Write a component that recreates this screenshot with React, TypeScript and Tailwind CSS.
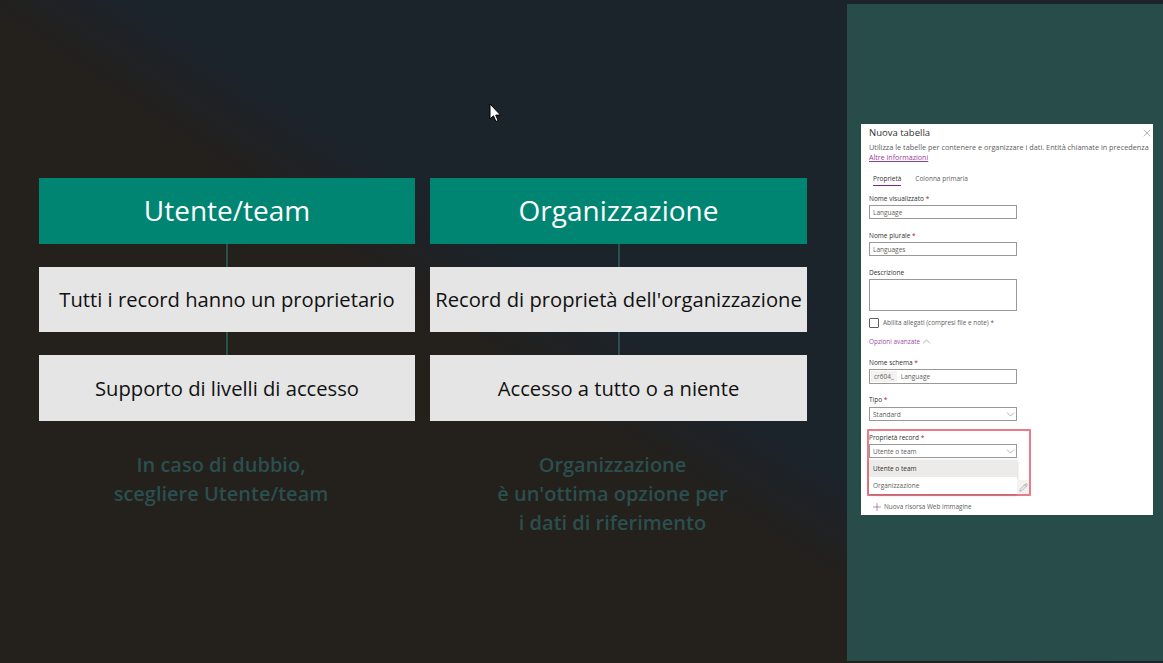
import { ChevronDown, ChevronUp, Pencil, Plus, X } from 'lucide-react';

const font = "font-['Open_Sans','Noto_Sans',sans-serif]";

function Column({ title, items, note, className }: { title: string; items: string[]; note: string[]; className: string }) {
  return (
    <div className={`flex flex-col ${className}`}>
      <div className="flex h-[66px] items-center justify-center bg-[#008573] pb-[2px] text-[28px] text-white">{title}</div>
      {items.map((item, i) => (
        <div key={item} className="flex flex-col items-center">
          <div className="h-[23px] w-[2px] bg-[#28504e]" />
          <div
            className={`flex w-full items-center justify-center whitespace-nowrap bg-[#e5e5e5] text-[20.2px] text-[#111] ${
              i === 0 ? 'h-[65px]' : 'h-[66px]'
            }`}
          >
            {item}
          </div>
        </div>
      ))}
      <div className="mt-[29px] pr-3 text-center text-[20px] leading-[29px] font-semibold text-[#2a4f4e]">
        {note.map((line) => (
          <div key={line}>{line}</div>
        ))}
      </div>
    </div>
  );
}

function Label({ text, required = true, className = '' }: { text: string; required?: boolean; className?: string }) {
  return (
    <div className={`mb-[-1px] pt-[1px] text-[6.5px] leading-[10px] text-[#323130] ${className}`}>
      {text}
      {required && <span className="text-[#a4262c]"> *</span>}
    </div>
  );
}

function Field({ value, chevron = false, className = 'mt-[2px]' }: { value: string; chevron?: boolean; className?: string }) {
  return (
    <div
      className={`flex h-[14px] w-[148px] items-center justify-between border-[1.5px] border-[#9a9896] bg-white pt-[1px] pl-[3px] text-[6.5px] text-[#605e5c] ${className}`}
    >
      {value}
      {chevron && <ChevronDown size={13} strokeWidth={1.2} className="mt-[-1px] mr-[-1px] shrink-0 text-[#8a8886]" />}
    </div>
  );
}

export default function App() {
  return (
    <div className={`relative flex h-[663px] w-[1163px] overflow-hidden bg-[linear-gradient(34deg,#24201c_44%,#1b232b_52%)] ${font}`}>
      <div className="flex w-[847px] gap-[15px] pt-[178px] pl-[39px]">
        <Column
          className="w-[376px]"
          title="Utente/team"
          items={['Tutti i record hanno un proprietario', 'Supporto di livelli di accesso']}
          note={['In caso di dubbio,', 'scegliere Utente/team']}
        />
        <Column
          className="w-[377px]"
          title="Organizzazione"
          items={["Record di proprietà dell'organizzazione", 'Accesso a tutto o a niente']}
          note={['Organizzazione', "è un'ottima opzione per", 'i dati di riferimento']}
        />
      </div>

      <div className="mt-1 mb-[2px] w-[316px] bg-[#274c4a] pt-[120px] pl-[14px]">
        <div className="relative h-[391px] w-[292px] bg-white px-2 pt-[2px]">
          <div className="flex items-center justify-between">
            <span className="text-[9.5px] leading-[13px] text-[#323130]">Nuova tabella</span>
            <X size={12} strokeWidth={1.2} className="mr-[-8px] text-[#8a8886]" />
          </div>
          <div className="mt-[3px] text-[7.3px] leading-[11px] whitespace-nowrap text-[#605e5c]">
            Utilizza le tabelle per contenere e organizzare i dati. Entità chiamate in precedenza
          </div>
          <div className="mt-[-1px] text-[7.1px] leading-[10px] text-[#9a3a9a] underline">Altre informazioni</div>

          <div className="mt-[12px] flex gap-[14px] pl-1 text-[6.5px] leading-[10px] text-[#605e5c]">
            <div className="border-b border-[#7b2a86] pb-[1px] text-[#323130]">Proprietà</div>
            <div>Colonna primaria</div>
          </div>

          <Label text="Nome visualizzato" className="mt-[7px]" />
          <Field value="Language" />
          <Label text="Nome plurale" className="mt-[11px]" />
          <Field value="Languages" />
          <Label text="Descrizione" required={false} className="mt-[11px]" />
          <div className="mt-[2px] h-[32px] w-[148px] border-[1.5px] border-[#9a9896]" />

          <div className="mt-[7px] flex items-center gap-[4px] text-[6.4px] leading-[10px] text-[#605e5c]">
            <div className="h-[10px] w-[10px] rounded-[1px] border border-[#605e5c]" />
            <span>Abilita allegati (compresi file e note) *</span>
          </div>

          <div className="mt-[8px] flex h-[10px] items-center pt-[1px] text-[6.4px] leading-[10px] text-[#a04aa6]">
            Opzioni avanzate
            <ChevronUp size={13} strokeWidth={1.2} className="text-[#8a8886]" />
          </div>

          <Label text="Nome schema" className="mt-[11px]" />
          <div className="mt-[2px] flex h-[15px] w-[148px] items-center border-[1.5px] border-[#9a9896] px-[1px] text-[6.5px] text-[#605e5c]">
            <span className="bg-[#f3f2f1] px-[3px] leading-[11px]">cr604_</span>
            <span className="ml-[4px]">Language</span>
          </div>

          <Label text="Tipo" className="mt-[10px]" />
          <Field value="Standard" chevron className="mt-[3px]" />

          <Label text="Proprietà record" className="mt-[11px]" />
          <Field value="Utente o team" chevron />

          <div className="absolute top-[305px] left-[6px] h-[67px] w-[164px] rounded-[1px] border-2 border-[#ea7b8a]" />
          <div className="absolute top-[336px] left-2 w-[148px] bg-white text-[6.5px] text-[#323130] shadow-[0_1px_3px_rgba(0,0,0,0.25)]">
            <div className="flex h-[17px] items-center bg-[#edebe9] pl-1">Utente o team</div>
            <div className="flex h-[17px] items-center pl-1 text-[#605e5c]">Organizzazione</div>
          </div>
          <div className="absolute top-[356px] left-[156px] flex h-[14px] w-[12px] items-center justify-center bg-[#f3f2f1]">
            <Pencil size={9} strokeWidth={1.6} className="text-[#8a8886]" />
          </div>

          <div className="absolute top-[377px] left-[10px] flex items-center gap-[1px] text-[6.4px] leading-[10px] text-[#605e5c]">
            <Plus size={12} strokeWidth={1.2} className="text-[#8a3a8a]" />
            Nuova risorsa Web immagine
          </div>
        </div>
      </div>

      <svg className="absolute top-[103px] left-[489px]" width="13" height="20" viewBox="0 0 13 20">
        <path d="M1 1v15l3.500-3.200 2.400 5.700 2.200-1-2.400-5.400H11.500z" fill="#fff" stroke="#000" strokeWidth="1" />
      </svg>
    </div>
  );
}
